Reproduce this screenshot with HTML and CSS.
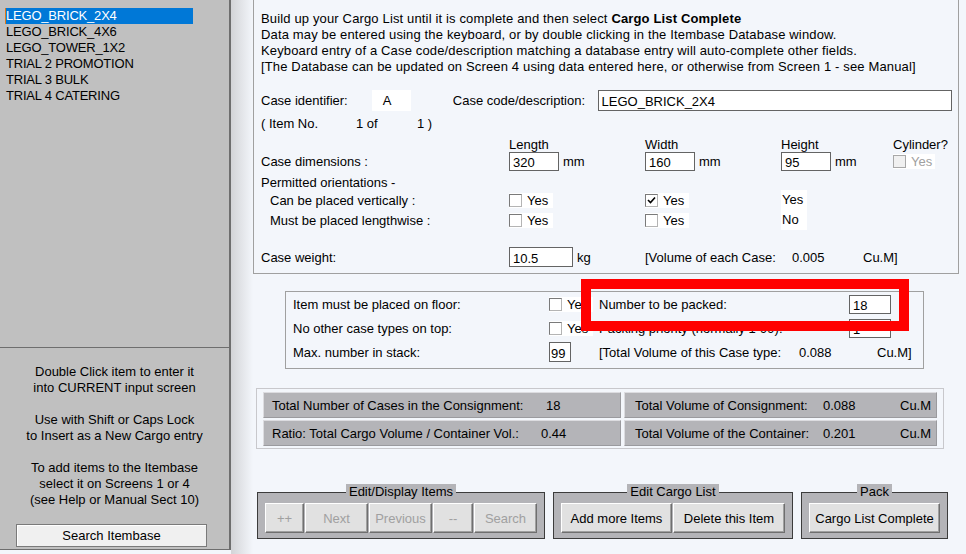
FILE: index.html
```html
<!DOCTYPE html>
<html lang="en">
<head>
<meta charset="UTF-8">
<title>Cargo List</title>
<link rel="stylesheet" href="styles.css">
</head>
<body>
<div class="app">
  <aside class="sidebar">
    <ul class="itemlist">
      <li class="selected">LEGO_BRICK_2X4</li>
      <li>LEGO_BRICK_4X6</li>
      <li>LEGO_TOWER_1X2</li>
      <li>TRIAL 2 PROMOTION</li>
      <li>TRIAL 3 BULK</li>
      <li>TRIAL 4 CATERING</li>
    </ul>
    <div class="help">
      <p>Double Click item to enter it<br>into CURRENT input screen</p>
      <p>Use with Shift or Caps Lock<br>to Insert as a New Cargo entry</p>
      <p>To add items to the Itembase<br>select it on Screens 1 or 4<br>(see Help or Manual Sect 10)</p>
    </div>
    <button class="search-btn">Search Itembase</button>
  </aside>
  <div class="shade"></div>

  <main class="main">
    <section class="case-box">
      <p class="intro">Build up your Cargo List until it is complete and then select <b>Cargo List Complete</b><br>
      Data may be entered using the keyboard, or by double clicking in the Itembase Database window.<br>
      Keyboard entry of a Case code/description matching a database entry will auto-complete other fields.<br>
      [The Database can be updated on Screen 4 using data entered here, or otherwise from Screen 1 - see Manual]</p>

      <div class="row-id">
        <span class="lbl-id">Case identifier:</span>
        <span class="val-id">A</span>
        <span class="lbl-code">Case code/description:</span>
        <input class="field inp-code" type="text" value="LEGO_BRICK_2X4">
      </div>

      <div class="row-item">
        <span class="item-a">( Item No.</span>
        <span class="item-b">1 of</span>
        <span>1 )</span>
      </div>

      <div class="grid5 r-head">
        <span></span>
        <span>Length</span>
        <span>Width</span>
        <span>Height</span>
        <span>Cylinder?</span>
      </div>

      <div class="grid5 r-dims">
        <span>Case dimensions :</span>
        <span class="unit"><input class="field inp-dim" type="text" value="320">mm</span>
        <span class="unit"><input class="field inp-dim" type="text" value="160">mm</span>
        <span class="unit"><input class="field inp-dim" type="text" value="95">mm</span>
        <label class="chk disabled"><span class="box"></span>Yes</label>
      </div>

      <div class="r-perm">Permitted orientations -</div>

      <div class="grid5 r-orient">
        <span class="indent">Can be placed vertically :</span>
        <label class="chk"><span class="box"></span>Yes</label>
        <label class="chk"><span class="box"><svg width="9" height="9" viewBox="0 0 9 9"><path d="M1 4 L3.5 6.5 L8 1.5" fill="none" stroke="#000" stroke-width="1.6"/></svg></span>Yes</label>
        <span class="answer">Yes</span>
      </div>
      <div class="grid5 r-orient">
        <span class="indent">Must be placed lengthwise :</span>
        <label class="chk"><span class="box"></span>Yes</label>
        <label class="chk"><span class="box"></span>Yes</label>
        <span class="answer">No</span>
      </div>

      <div class="grid5 r-weight">
        <span>Case weight:</span>
        <span class="unit"><input class="field inp-weight" type="text" value="10.5">kg</span>
        <span class="vol-each">
          <span class="ve-lbl">[Volume of each Case:</span>
          <span class="ve-val">0.005</span>
          <span>Cu.M]</span>
        </span>
      </div>
    </section>

    <section class="opt-box">
      <div class="grid4">
        <span>Item must be placed on floor:</span>
        <label class="chk"><span class="box"></span>Yes</label>
        <span>Number to be packed:</span>
        <input class="field inp-num" type="text" value="18">
      </div>
      <div class="grid4">
        <span>No other case types on top:</span>
        <label class="chk"><span class="box"></span>Yes</label>
        <span>Packing priority (normally 1-99):</span>
        <input class="field inp-num" type="text" value="1">
      </div>
      <div class="grid4">
        <span>Max. number in stack:</span>
        <span><input class="field inp-stack" type="text" value="99"></span>
        <span class="vol-type">
          <span class="vt-lbl">[Total Volume of this Case type:</span>
          <span class="vt-val">0.088</span>
          <span>Cu.M]</span>
        </span>
      </div>
      <div class="highlight"></div>
    </section>

    <section class="totals">
      <div class="cell">
        <span class="t-lbl-a">Total Number of Cases in the Consignment:</span>
        <span>18</span>
      </div>
      <div class="cell cell-right">
        <span class="t-lbl-r">Total Volume of Consignment:</span>
        <span class="t-val-r">0.088</span>
        <span>Cu.M</span>
      </div>
      <div class="cell">
        <span class="t-lbl-b">Ratio: Total Cargo Volume / Container Vol.:</span>
        <span>0.44</span>
      </div>
      <div class="cell cell-right">
        <span class="t-lbl-r">Total Volume of the Container:</span>
        <span class="t-val-r">0.201</span>
        <span>Cu.M</span>
      </div>
    </section>

    <div class="groups">
      <fieldset class="grp grp-edit">
        <legend>Edit/Display Items</legend>
        <div class="btnrow">
          <button class="btn btn-sm" disabled>++</button>
          <button class="btn btn-md" disabled>Next</button>
          <button class="btn btn-md" disabled>Previous</button>
          <button class="btn btn-sm2" disabled>--</button>
          <button class="btn btn-md" disabled>Search</button>
        </div>
      </fieldset>
      <fieldset class="grp grp-cargo">
        <legend>Edit Cargo List</legend>
        <div class="btnrow">
          <button class="btn btn-lg">Add more Items</button>
          <button class="btn btn-lg2">Delete this Item</button>
        </div>
      </fieldset>
      <fieldset class="grp grp-pack">
        <legend>Pack</legend>
        <div class="btnrow">
          <button class="btn btn-xl">Cargo List Complete</button>
        </div>
      </fieldset>
    </div>
  </main>
</div>
</body>
</html>
```

FILE: styles.css
```css
body {
  margin: 0;
  font-family: "Liberation Sans", Arial, sans-serif;
  font-size: 13px;
  color: #000;
  background-color: #f3f6fb;
}
.app {
  display: flex;
  height: 554px;
  overflow: hidden;
}

/* left itembase panel */
.sidebar {
  flex: none;
  width: 229px;
  height: 549px;
  background-color: #c0c0c0;
  border-right: 2px solid #6e6e6e;
  border-bottom: 1px solid #6e6e6e;
  display: flex;
  flex-direction: column;
}
.itemlist {
  list-style: none;
  margin: 0;
  padding: 8px 0 0 5px;
  height: 339px;
  border-bottom: 1px solid #6e6e6e;
}
.itemlist li {
  width: 187px;
  height: 16px;
  line-height: 16px;
  padding-left: 1px;
  white-space: nowrap;
  letter-spacing: -0.2px;
}
.itemlist li.selected {
  background-color: #0078d7;
  color: #fff;
  box-shadow: inset 1px 0 #e07b1a;
}
.help {
  margin-top: 16px;
  text-align: center;
  line-height: 16px;
}
.help p {
  margin: 0 0 16px;
}
.help p:last-child {
  margin-bottom: 0;
}
.search-btn {
  margin: 16px 0 0 16px;
  width: 191px;
  height: 23px;
  padding: 0;
  font: inherit;
  color: #000;
  background-color: #f0f0f0;
  border: 1px solid #7a7a7a;
  box-shadow: inset 1px 1px #fff;
}
.shade {
  flex: none;
  width: 22px;
  background: linear-gradient(to right, #d3d4d7, #f3f6fb);
}

.main {
  flex: 1;
}

/* case details */
.case-box {
  box-sizing: border-box;
  width: 706px;
  margin-top: -1px;
  padding: 11px 6px 6px 7px;
  border: 1px solid #a0a0a0;
}
.intro {
  margin: 0;
  line-height: 16px;
  white-space: nowrap;
  letter-spacing: 0.15px;
}
.field {
  box-sizing: border-box;
  height: 20px;
  margin: 0;
  padding: 2px 3px 0;
  font: inherit;
  color: #000;
  background-color: #fff;
  border: 1px solid #646464;
  border-radius: 0;
  outline: none;
}
.row-id {
  display: flex;
  align-items: center;
  height: 21px;
  margin-top: 15px;
}
.lbl-id {
  width: 111px;
}
.val-id {
  box-sizing: border-box;
  width: 39px;
  height: 21px;
  line-height: 21px;
  padding-left: 11px;
  background-color: #fff;
}
.lbl-code {
  width: 145px;
  margin-left: 42px;
}
.inp-code {
  width: 355px;
  height: 21px;
}
.row-item {
  display: flex;
  height: 16px;
  line-height: 16px;
  margin-top: 5px;
}
.item-a {
  width: 95px;
}
.item-b {
  width: 61px;
}
.grid5 {
  display: grid;
  grid-template-columns: 248px 136px 136px 112px 1fr;
  align-items: center;
}
.r-head {
  height: 16px;
  margin-top: 4px;
}
.r-dims {
  height: 19px;
}
.unit {
  display: flex;
  align-items: center;
  gap: 4px;
}
.inp-dim {
  width: 50px;
  height: 19px;
}
.inp-weight {
  width: 64px;
}
.r-perm {
  height: 15px;
  line-height: 15px;
  margin-top: 4px;
}
.r-orient {
  height: 20px;
}
.indent {
  padding-left: 9px;
}
.answer {
  width: 25px;
  height: 20px;
  line-height: 20px;
  padding-left: 1px;
  background-color: #fff;
}
.r-weight {
  height: 20px;
  margin-top: 17px;
}
.vol-each {
  grid-column: 3 / 6;
  display: flex;
}
.ve-lbl {
  width: 147px;
}
.ve-val {
  width: 71px;
}

/* checkbox */
.chk {
  display: flex;
  align-items: center;
  gap: 5px;
  width: 44px;
  height: 15px;
  background-color: #fff;
}
.chk .box {
  box-sizing: border-box;
  width: 13px;
  height: 13px;
  border: 1px solid #7a7a7a;
  border-right-color: #b4b4b4;
  border-bottom-color: #b4b4b4;
  background-color: #fff;
  display: flex;
  align-items: center;
  justify-content: center;
}
.chk.disabled {
  width: 42px;
  color: #a0a0a0;
}
.chk.disabled .box {
  background-color: #f0f0f0;
  border-color: #a8a8a8;
}

/* stacking options */
.opt-box {
  position: relative;
  box-sizing: border-box;
  width: 639px;
  margin: 17px 0 0 32px;
  padding: 0 0 4px 7px;
  border: 1px solid #a0a0a0;
}
.grid4 {
  display: grid;
  grid-template-columns: 256px 50px 250px 1fr;
  align-items: center;
  height: 24px;
}
.inp-num {
  width: 42px;
  height: 19px;
}
.inp-stack {
  width: 22px;
  padding: 2px 1px 0;
}
.vol-type {
  grid-column: 3 / 5;
  display: flex;
}
.vt-lbl {
  width: 200px;
}
.vt-val {
  width: 78px;
}
.highlight {
  position: absolute;
  left: 295px;
  top: -13px;
  box-sizing: border-box;
  width: 328px;
  height: 52px;
  border: 10px solid #ff0000;
}

/* consignment totals */
.totals {
  box-sizing: border-box;
  width: 688px;
  margin: 19px 0 0 3px;
  padding: 3px 6px 2px;
  border: 1px solid #c8c8cc;
  display: grid;
  grid-template-columns: 358px 1fr;
  grid-auto-rows: 26px;
  gap: 2px 3px;
}
.cell {
  display: flex;
  align-items: center;
  padding-left: 8px;
  background-color: #b4b4b8;
  border: 1px solid;
  border-color: #dcdce0 #9a9a9e #9a9a9e #dcdce0;
}
.t-lbl-a {
  width: 274px;
}
.t-lbl-b {
  width: 269px;
}
.cell-right {
  padding-left: 10px;
}
.t-lbl-r {
  width: 188px;
}
.t-val-r {
  width: 77px;
}

/* button groups */
.groups {
  display: flex;
  gap: 8px;
  margin: 35px 0 0 4px;
}
.grp {
  box-sizing: border-box;
  margin: 0;
  padding: 3px 7px 5px;
  background-color: #b4b4b8;
  border: 1px solid #3c3c3c;
  min-inline-size: 0;
}
.grp legend {
  margin: 0 auto;
  padding: 0 3px;
  line-height: 16px;
  background-color: #b4b4b8;
}
.grp-edit {
  width: 288px;
}
.grp-cargo {
  width: 240px;
}
.grp-pack {
  width: 147px;
}
.btnrow {
  display: flex;
  gap: 1px;
}
.btn {
  height: 30px;
  padding: 0;
  font: inherit;
  color: #000;
  background-color: #e1e1e1;
  border: 1px solid;
  border-color: #fff #6f6f6f #6f6f6f #fff;
  box-shadow: inset -1px -1px #a0a0a0;
}
.btn:disabled {
  color: #a0a0a0;
}
.btn-sm {
  width: 39px;
}
.btn-sm2 {
  width: 40px;
}
.btn-md {
  width: 63px;
}
.btn-lg {
  width: 111px;
}
.btn-lg2 {
  width: 112px;
}
.btn-xl {
  width: 135px;
}
```
